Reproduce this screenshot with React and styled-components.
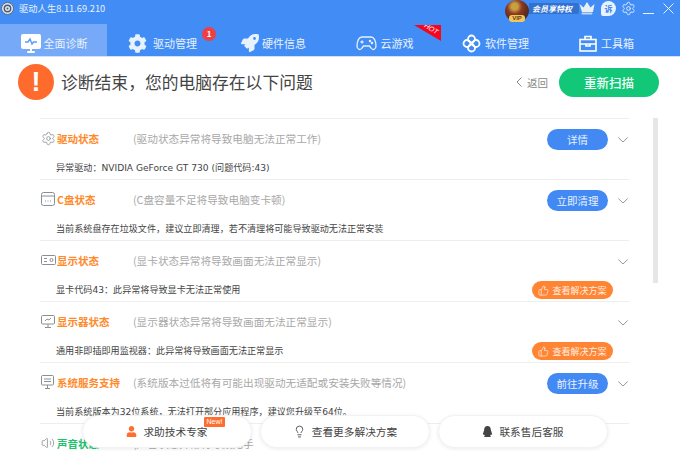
import React from 'react';
import styled, { createGlobalStyle } from 'styled-components';
import { FaCog, FaRocket, FaUser, FaQq } from 'react-icons/fa';
import { Lightbulb, Settings, ThumbsUp, Volume2 } from 'lucide-react';

const GlobalStyle = createGlobalStyle`
  html, body { margin: 0; padding: 0; background: #fff; }
  body { font-family: "Noto Sans CJK SC", "Noto Sans", sans-serif; }
  * { box-sizing: border-box; }
`;

const BLUE = '#418df5';

const NAV_ITEMS = [
  { label: '全面诊断', icon: <ScreenPulseIcon />, active: true, gap: 2 },
  { label: '驱动管理', icon: <FaCog size={19} />, badge: true, gap: 6 },
  { label: '硬件信息', icon: <FaRocket size={18} />, gap: 3 },
  { label: '云游戏', icon: <PadIcon />, hot: true, gap: 4 },
  { label: '软件管理', icon: <FlowerIcon />, gap: 4 },
  { label: '工具箱', icon: <ToolboxIcon />, gap: 4 },
];

const ROWS = [
  {
    title: '驱动状态',
    note: '(驱动状态异常将导致电脑无法正常工作)',
    desc: '异常驱动：NVIDIA GeForce GT 730 (问题代码:43)',
    icon: <Settings size={15} strokeWidth={1.3} />,
    action: '详情',
  },
  {
    title: 'C盘状态',
    note: '(C盘容量不足将导致电脑变卡顿)',
    desc: '当前系统盘存在垃圾文件，建议立即清理，若不清理将可能导致驱动无法正常安装',
    icon: <DiskIcon />,
    action: '立即清理',
  },
  {
    title: '显示状态',
    note: '(显卡状态异常将导致画面无法正常显示)',
    desc: '显卡代码43：此异常将导致显卡无法正常使用',
    icon: <CardIcon />,
    fix: true,
  },
  {
    title: '显示器状态',
    note: '(显示器状态异常将导致画面无法正常显示)',
    desc: '通用非即插即用监视器：此异常将导致画面无法正常显示',
    icon: <DisplayIcon />,
    fix: true,
    chevron: true,
  },
  {
    title: '系统服务支持',
    note: '(系统版本过低将有可能出现驱动无适配或安装失败等情况)',
    desc: '当前系统版本为32位系统，无法打开部分应用程序，建议您升级至64位。',
    icon: <ServiceIcon />,
    action: '前往升级',
  },
  {
    title: '声音状态',
    note: '(声音状态异常将导致无手',
    icon: <Volume2 size={14} strokeWidth={1.4} />,
    ok: true,
  },
];

function ScreenPulseIcon() {
  return (
    <svg width="22" height="21" viewBox="0 0 22 21">
      <rect x="1" y="1" width="20" height="15" rx="2" fill="#fff" />
      <rect x="7" y="18" width="8" height="2" rx="1" fill="#fff" />
      <rect x="10" y="15" width="2" height="4" fill="#fff" />
      <path d="M5 9h3l2-3 2 5 1.500-2H17" fill="none" stroke="#5c9cf6" strokeWidth="1.400" />
    </svg>
  );
}

function PadIcon() {
  return (
    <svg width="21" height="17" viewBox="0 0 21 17" fill="none" stroke="#e8f1fe" strokeWidth="1.300">
      <path d="M6 2h9c3 0 5 4 5 9 0 3-3 5-5 2l-1.500-2h-6L6 13c-2 3-5 1-5-2 0-5 2-9 5-9z" />
      <path d="M6 5.500v3M4.500 7h3" />
      <circle cx="14" cy="6" r=".6" />
      <circle cx="16" cy="8" r=".6" />
    </svg>
  );
}

function FlowerIcon() {
  return (
    <svg width="19" height="19" viewBox="0 0 19 19" fill="none" stroke="#fff" strokeWidth="1.800">
      <circle cx="9.500" cy="5" r="3.500" />
      <circle cx="9.500" cy="14" r="3.500" />
      <circle cx="5" cy="9.500" r="3.500" />
      <circle cx="14" cy="9.500" r="3.500" />
    </svg>
  );
}

function ToolboxIcon() {
  return (
    <svg width="18" height="17" viewBox="0 0 18 17" fill="none" stroke="#fff" strokeWidth="1.600">
      <rect x="1" y="4.500" width="16" height="11.500" />
      <path d="M6 4.500V1.500h6v3M1 9h16M7 9v2h4V9" />
    </svg>
  );
}

function DiskIcon() {
  return (
    <svg width="14" height="14" viewBox="0 0 14 14" fill="none" stroke="#8a8f96">
      <rect x=".5" y=".5" width="13" height="13" rx="2" />
      <path d="M.5 4h13M4 9h1M6.500 9h1M9 9h1" />
    </svg>
  );
}

function CardIcon() {
  return (
    <svg width="15" height="12" viewBox="0 0 15 12" fill="none" stroke="#8a8f96">
      <rect x=".5" y="1.500" width="14" height="9" rx="1" />
      <circle cx="10.500" cy="6" r="1.500" />
      <path d="M3 4.500h3M3 7.500h3" />
    </svg>
  );
}

function DisplayIcon() {
  return (
    <svg width="14" height="14" viewBox="0 0 14 14" fill="none" stroke="#8a8f96">
      <rect x=".5" y="1.500" width="13" height="8.500" rx="1" />
      <path d="M7 10v3M4 13.500h6M4 7l2-2 2 1 2-2" />
    </svg>
  );
}

function ServiceIcon() {
  return (
    <svg width="13" height="14" viewBox="0 0 13 14" fill="none" stroke="#8a8f96">
      <rect x=".5" y=".5" width="12" height="9.500" rx="1" />
      <path d="M3 4h7M3 6.500h7M6.500 10v3M4 13.500h5" />
    </svg>
  );
}

function LogoIcon() {
  return (
    <svg width="13" height="13" viewBox="0 0 13 13">
      <circle cx="6.500" cy="6.500" r="6" fill="#dfe7f2" stroke="#5a6675" />
      <circle cx="6.500" cy="6.500" r="3.200" fill="none" stroke="#4a5a70" strokeWidth="1.400" />
      <circle cx="6.500" cy="6.500" r="1" fill="#4a5a70" />
    </svg>
  );
}

function CrownIcon() {
  return (
    <svg width="18" height="13" viewBox="0 0 17 13">
      <path d="M1 2l4 3.500L8.500 0 12 5.500 16 2l-1.500 8h-11z" fill="#e8eef6" />
      <rect x="3" y="10.500" width="11" height="2" rx="1" fill="#c6d6ea" />
    </svg>
  );
}

function CloseIcon() {
  return (
    <svg width="11" height="11" viewBox="0 0 11 11" fill="none" stroke="#eaf2fe" strokeWidth="1">
      <path d="M.5.500l10 10M10.500.500l-10 10" />
    </svg>
  );
}

function DownChevron() {
  return (
    <svg width="10" height="6" viewBox="0 0 10 6" fill="none" stroke="#8c8c8c" strokeWidth=".9">
      <path d="M.3.500L5 5l4.700-4.500" />
    </svg>
  );
}

function BackChevron() {
  return (
    <svg width="6" height="10" viewBox="0 0 6 10" fill="none" stroke="#888" strokeWidth="1">
      <path d="M5.500.500L1 5l4.500 4.500" />
    </svg>
  );
}

function App() {
  return (
    <Page>
      <GlobalStyle />
      <TitleBar>
        <AppName>
          <LogoIcon />
          驱动人生8.11.69.210
        </AppName>
        <TitleTools>
          <Vip>
            <VipAvatar>
              <VipTag>VIP</VipTag>
            </VipAvatar>
            <VipLabel>会员享特权</VipLabel>
          </Vip>
          <CrownIcon />
          <ComplaintBubble>诉</ComplaintBubble>
          <GearSlot>
            <Settings size={15} strokeWidth={1.4} />
          </GearSlot>
          <MinimizeBar />
          <CloseIcon />
        </TitleTools>
      </TitleBar>

      <Nav>
        {NAV_ITEMS.map((item) => (
          <Tab key={item.label} $active={item.active} $gap={item.gap}>
            {item.icon}
            <span>{item.label}</span>
            {item.badge && <Badge>1</Badge>}
            {item.hot && (
              <HotRibbon>
                <span>HOT</span>
              </HotRibbon>
            )}
          </Tab>
        ))}
      </Nav>

      <Summary>
        <AlertDot>!</AlertDot>
        <SummaryTitle>诊断结束，您的电脑存在以下问题</SummaryTitle>
        <BackLink>
          <BackChevron />
          返回
        </BackLink>
        <RescanButton>重新扫描</RescanButton>
      </Summary>

      <Body>
        <List>
          {ROWS.map((row) => (
            <Row key={row.title}>
              <RowHead>
                <RowIcon>{row.icon}</RowIcon>
                <RowTitle $ok={row.ok}>{row.title}</RowTitle>
                <RowNote>{row.note}</RowNote>
                {row.action && <ActionButton>{row.action}</ActionButton>}
                <ChevronSlot>{!row.ok && <DownChevron />}</ChevronSlot>
              </RowHead>
              {row.desc && (
                <RowDesc>
                  <span>{row.desc}</span>
                  {row.fix && (
                    <FixButton>
                      <ThumbsUp size={11} strokeWidth={1.5} />
                      查看解决方案
                    </FixButton>
                  )}
                </RowDesc>
              )}
            </Row>
          ))}
        </List>
        <ScrollThumb />
      </Body>

      <FooterBar>
        <FooterButton>
          <OrangeIcon>
            <FaUser size={11} />
          </OrangeIcon>
          求助技术专家
          <NewTag>New!</NewTag>
        </FooterButton>
        <FooterButton>
          <Lightbulb size={13} strokeWidth={1.6} />
          查看更多解决方案
        </FooterButton>
        <FooterButton>
          <FaQq size={11} />
          联系售后客服
        </FooterButton>
      </FooterBar>
    </Page>
  );
}

const Page = styled.div`
  position: relative;
  width: 680px;
  height: 451px;
  overflow: hidden;
  background: #fff;
`;

const TitleBar = styled.div`
  display: flex;
  justify-content: space-between;
  align-items: flex-start;
  height: 24px;
  background: ${BLUE};
  color: #fff;
`;

const AppName = styled.div`
  display: flex;
  align-items: center;
  gap: 5px;
  height: 16px;
  padding-left: 1px;
  font-size: 9.300px;
  color: #e8f0fd;
`;

const TitleTools = styled.div`
  display: flex;
  align-items: center;
  height: 16px;
  padding-right: 6px;
  color: #eaf2fe;
`;

const Vip = styled.div`
  display: flex;
  align-items: flex-start;
  margin-top: 6px;
  margin-right: -1px;
`;

const VipAvatar = styled.div`
  position: relative;
  z-index: 1;
  width: 24px;
  height: 22px;
  border-radius: 50%;
  background: radial-gradient(circle at 40% 30%, #c9a040 0 15%, #8e3a22 35%, #5d2c20 60%, #2f2a3d 100%);
`;

const VipTag = styled.span`
  position: absolute;
  left: 4px;
  bottom: 0;
  width: 16px;
  height: 7px;
  border-radius: 3px;
  background: #f3c55c;
  color: #6b3d10;
  font-family: "Liberation Sans", sans-serif;
  font-size: 6px;
  font-weight: 700;
  line-height: 7px;
  text-align: center;
`;

const VipLabel = styled.span`
  margin-top: 3px;
  width: 50px;
  height: 11px;
  padding-left: 3px;
  background: #3272cf;
  border-radius: 0 2px 2px 0;
  font-size: 8px;
  font-weight: 700;
  font-style: italic;
  line-height: 11px;
  white-space: nowrap;
  color: #fff;
`;

const ComplaintBubble = styled.span`
  width: 15px;
  height: 15px;
  margin-left: 5px;
  border-radius: 50% 50% 50% 2px;
  background: #e8f1fe;
  color: #3f86ea;
  font-size: 8px;
  font-weight: 700;
  line-height: 15px;
  text-align: center;
`;

const GearSlot = styled.span`
  display: flex;
  margin-left: 5px;
`;

const MinimizeBar = styled.span`
  width: 11px;
  height: 1px;
  margin: 10px 9px 0 7px;
  background: #eaf2fe;
`;

const Nav = styled.nav`
  display: grid;
  grid-template-columns: 107px repeat(5, 111px);
  height: 33px;
  background: ${BLUE};
  border-bottom: 1px solid #cfe0fb;
`;

const Tab = styled.div`
  position: relative;
  display: flex;
  align-items: center;
  justify-content: center;
  gap: ${(p) => p.$gap}px;
  padding-top: 6px;
  background: ${(p) => (p.$active ? '#76a9f7' : 'transparent')};
  color: #e8f1fe;
  font-size: 11px;
  white-space: nowrap;
`;

const Badge = styled.span`
  position: absolute;
  top: 3px;
  left: 95px;
  width: 14px;
  height: 14px;
  border-radius: 50%;
  background: #ef3f45;
  color: #fff;
  font-size: 8px;
  font-weight: 700;
  line-height: 14px;
  text-align: center;
`;

const HotRibbon = styled.div`
  position: absolute;
  top: 1px;
  left: 85px;
  width: 27px;
  height: 16px;
  background: #f5061e;
  clip-path: polygon(0 0, 100% 0, 100% 100%);

  span {
    position: absolute;
    top: 0;
    right: 2px;
    transform: rotate(32deg);
    font-family: "Liberation Sans", sans-serif;
    font-size: 7px;
    font-style: italic;
    color: #fff;
  }
`;

const Summary = styled.section`
  display: flex;
  align-items: center;
  height: 61px;
  padding: 0 21px 11px 18px;
`;

const AlertDot = styled.div`
  width: 36px;
  height: 36px;
  border-radius: 50%;
  background: #ff6a2d;
  color: #fff;
  font-family: "Liberation Sans", sans-serif;
  font-size: 27px;
  font-weight: 700;
  line-height: 36px;
  text-align: center;
`;

const SummaryTitle = styled.h1`
  flex: 1;
  margin: 0 0 0 7px;
  font-size: 16.800px;
  font-weight: 400;
  color: #444;
`;

const BackLink = styled.div`
  display: flex;
  align-items: center;
  gap: 5px;
  margin-right: 11px;
  font-size: 10.500px;
  color: #888;
`;

const RescanButton = styled.button`
  width: 100px;
  height: 29px;
  border: none;
  border-radius: 15px;
  background: #12c878;
  color: #f2fff8;
  font-family: inherit;
  font-size: 12.500px;
  font-weight: 500;
`;

const Body = styled.div`
  display: flex;
  align-items: flex-start;
  padding-left: 40px;
`;

const List = styled.div`
  width: 589px;
`;

const Row = styled.div`
  height: 61px;
  padding-top: 10px;
  border-top: 1px solid #eeeeee;
`;

const RowHead = styled.div`
  display: flex;
  align-items: center;
  height: 21px;
  padding-left: 1px;
`;

const RowIcon = styled.span`
  display: flex;
  width: 16px;
  margin-bottom: 3px;
  color: #8a8f96;
`;

const RowTitle = styled.span`
  width: 76px;
  margin-bottom: 3px;
  font-size: 10.500px;
  font-weight: 700;
  color: ${(p) => (p.$ok ? '#22c06f' : '#ff8a2b')};
  white-space: nowrap;
`;

const RowNote = styled.span`
  flex: 1;
  margin-bottom: 3px;
  font-size: 10.650px;
  color: #a8a8a8;
  white-space: nowrap;
`;

const ActionButton = styled.button`
  width: 61px;
  height: 21px;
  padding: 0;
  border: none;
  border-radius: 11px;
  background: #4289f4;
  color: #e8f1fe;
  font-family: inherit;
  font-size: 10.500px;
`;

const ChevronSlot = styled.span`
  display: flex;
  justify-content: flex-end;
  width: 21px;
  padding-right: 1px;
`;

const RowDesc = styled.div`
  display: flex;
  align-items: center;
  justify-content: space-between;
  height: 18px;
  margin-top: 9px;
  padding: 0 16px;
  font-family: "DejaVu Sans", "Noto Sans CJK SC", sans-serif;
  font-size: 9.100px;
  color: #444;
  white-space: nowrap;

  & > span {
    margin-bottom: 3px;
  }
`;

const FixButton = styled.button`
  display: flex;
  align-items: center;
  justify-content: center;
  gap: 3px;
  width: 81px;
  height: 18px;
  padding: 0;
  border: none;
  border-radius: 9px;
  background: #ff8534;
  color: #fff0e4;
  font-family: "Noto Sans CJK SC", sans-serif;
  font-size: 9px;
`;

const ScrollThumb = styled.div`
  width: 5px;
  height: 165px;
  margin-left: 24px;
  background: #e6e6e6;
`;

const FooterBar = styled.div`
  position: absolute;
  left: 82px;
  top: 415px;
  display: flex;
  gap: 8px;
`;

const FooterButton = styled.div`
  position: relative;
  display: flex;
  align-items: center;
  justify-content: center;
  gap: 6px;
  width: 170px;
  height: 33px;
  border: 1px solid #f2f2f2;
  border-radius: 17px;
  background: #fff;
  box-shadow: 0 1px 4px rgba(0, 0, 0, 0.08);
  font-size: 10.700px;
  color: #444;
`;

const OrangeIcon = styled.span`
  display: flex;
  color: #ff6e2e;
`;

const NewTag = styled.span`
  position: absolute;
  top: 1px;
  left: 121px;
  width: 21px;
  height: 10px;
  border-radius: 1px;
  background: #ff6e2e;
  color: #fff;
  font-family: "Liberation Sans", sans-serif;
  font-size: 7px;
  line-height: 10px;
  text-align: center;
`;

export default App;
